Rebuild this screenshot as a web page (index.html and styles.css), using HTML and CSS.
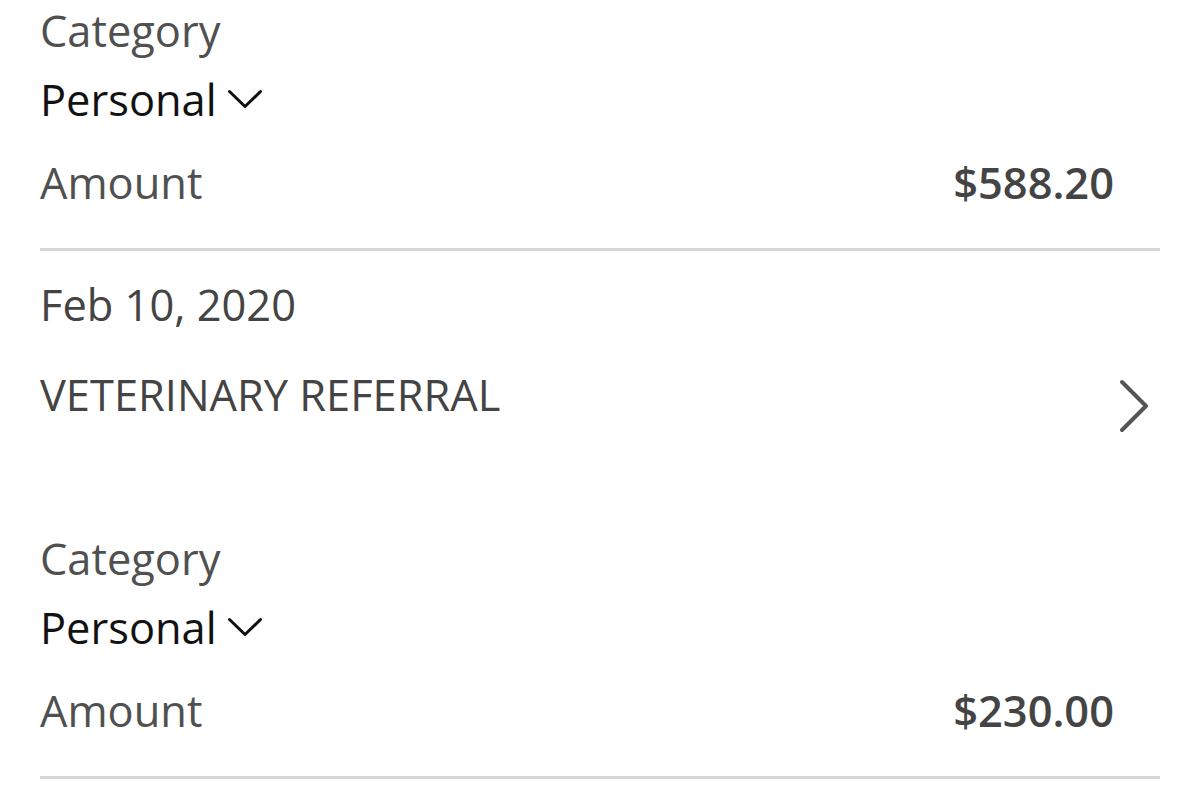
FILE: index.html
```html
<!DOCTYPE html>
<html lang="en">
<head>
<meta charset="utf-8">
<title>Transactions</title>
<link rel="stylesheet" href="styles.css">
</head>
<body>
<main class="list">
  <section class="txn-details">
    <div class="label">Category</div>
    <div class="select">
      <span>Personal</span>
      <svg class="chev-down" width="36" height="20" viewBox="0 0 36 20" aria-hidden="true"><polyline points="2.5,2.5 18,17.5 33.5,2.5" fill="none" stroke="#111" stroke-width="3" stroke-linecap="round" stroke-linejoin="round"/></svg>
    </div>
    <div class="amount-row">
      <span class="label">Amount</span>
      <span class="amount">$588.20</span>
    </div>
  </section>

  <section class="txn-head">
    <div class="date">Feb 10, 2020</div>
    <div class="merchant-row">
      <span class="merchant">VETERINARY REFERRAL</span>
      <svg class="chev-right" width="32" height="56" viewBox="0 0 32 56" aria-hidden="true"><polyline points="4,4 28,28 4,52" fill="none" stroke="#555" stroke-width="4" stroke-linecap="round" stroke-linejoin="round"/></svg>
    </div>
  </section>

  <section class="txn-details second">
    <div class="label">Category</div>
    <div class="select">
      <span>Personal</span>
      <svg class="chev-down" width="36" height="20" viewBox="0 0 36 20" aria-hidden="true"><polyline points="2.5,2.5 18,17.5 33.5,2.5" fill="none" stroke="#111" stroke-width="3" stroke-linecap="round" stroke-linejoin="round"/></svg>
    </div>
    <div class="amount-row">
      <span class="label">Amount</span>
      <span class="amount">$230.00</span>
    </div>
  </section>
</main>
</body>
</html>
```
FILE: styles.css
```css
html, body {
  margin: 0;
  padding: 0;
  background: #ffffff;
}

body {
  font-family: "Open Sans", "Noto Sans", sans-serif;
  font-size: 43.4px;
  line-height: 60px;
  color: #444;
}

.list {
  padding: 0 40px;
}

.txn-details {
  padding-top: 1px;
  padding-bottom: 35px;
  border-bottom: 3px solid #d6d6d6;
}

.txn-details.second {
  padding-top: 0;
}

.label {
  color: #505050;
}

.select {
  display: flex;
  align-items: center;
  margin-top: 9px;
  color: #121212;
}

.chev-down {
  margin-left: 10px;
  margin-top: -2px;
}

.amount-row {
  display: flex;
  justify-content: space-between;
  margin-top: 23px;
}

.amount {
  font-weight: 600;
  color: #444;
  margin-right: 46px;
}

.txn-head {
  padding-top: 24px;
  padding-bottom: 95px;
}

.date {
  color: #444;
}

.merchant-row {
  display: flex;
  justify-content: space-between;
  align-items: flex-start;
  margin-top: 30px;
}

.merchant {
  color: #444;
}

.chev-right {
  margin-top: 13px;
  margin-right: 10px;
}
```
